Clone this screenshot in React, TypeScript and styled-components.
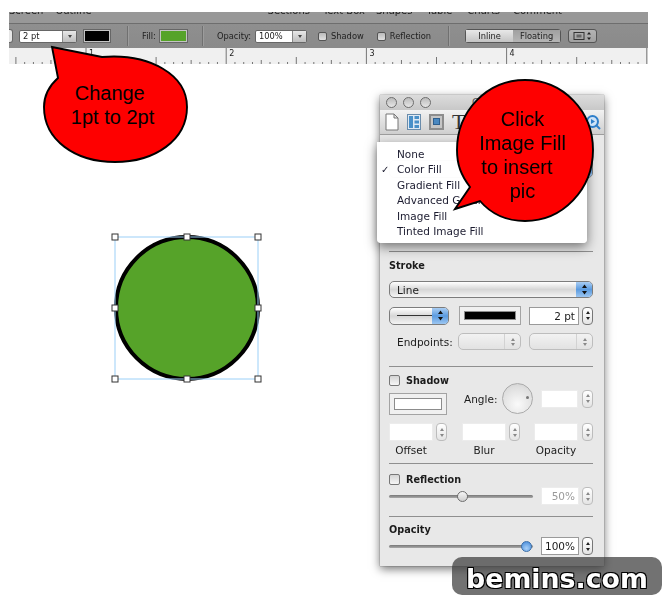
import { createGlobalStyle } from "styled-components";
import styled from "styled-components";
import type { ReactNode } from "react";

const GlobalStyle = createGlobalStyle`
  html, body { margin: 0; padding: 0; background: #fff; }
  body { font-family: "DejaVu Sans", sans-serif; }
`;

const Stage = styled.div`
  position: relative;
  width: 664px;
  height: 602px;
  overflow: hidden;
  background: #fff;
  padding: 12px 0 0 9px;
  box-sizing: border-box;
`;

/* ---- top toolbar ---- */
const Chrome = styled.div`
  width: 639px;
  filter: blur(0.35px);
`;

const MenuStrip = styled.div`
  height: 11px;
  overflow: hidden;
  background: #989898;
  border-bottom: 1px solid #6e6e6e;
  display: flex;
  color: #222;
  font-size: 10px;
  line-height: 10px;
`;

const MenuWord = styled.span<{ $left: number }>`
  margin-left: ${({ $left }) => $left}px;
  margin-top: -6px;
  white-space: nowrap;
`;

const ToolRow = styled.div`
  height: 24px;
  background: linear-gradient(#8f8f8f, #8a8a8a);
  display: flex;
  align-items: center;
  font-size: 8.3px;
  color: #222;
`;

const Spaced = styled.div<{ $left?: number }>`
  margin-left: ${({ $left }) => $left ?? 0}px;
  display: flex;
  align-items: center;
`;

const StubBox = styled(Spaced)`
  width: 3px;
  height: 12px;
  background: #e6e6e6;
  border: 1px solid #666;
  border-left: 0;
  border-radius: 0 3px 3px 0;
`;

const Combo = styled(Spaced)<{ $width: number }>`
  width: ${({ $width }) => $width}px;
  height: 13px;
  border: 1px solid #666;
  border-radius: 2px;
  background: #fff;
  box-sizing: border-box;
  padding-left: 3px;
  color: #222;
  position: relative;
  justify-content: flex-start;
  white-space: nowrap;
`;

const ComboArrow = styled.span`
  position: absolute;
  right: 0;
  top: 0;
  bottom: 0;
  width: 13px;
  background: linear-gradient(#e8e8e8, #bdbdbd);
  border-left: 1px solid #888;
  display: flex;
  align-items: center;
  justify-content: center;
  &::after {
    content: "";
    border-left: 2px solid transparent;
    border-right: 2px solid transparent;
    border-top: 3px solid #444;
  }
`;

const Swatch = styled(Spaced)<{ $color: string; $width: number }>`
  width: ${({ $width }) => $width}px;
  height: 14px;
  box-sizing: border-box;
  background: ${({ $color }) => $color};
  border: 2px solid #c4c4c4;
  outline: 1px solid #666;
  outline-offset: -1px;
`;

const ToolSep = styled(Spaced)`
  width: 1px;
  height: 20px;
  background: #707070;
  border-right: 1px solid #9c9c9c;
`;

const ToolLabel = styled(Spaced)`
  white-space: nowrap;
  color: #1f1f1f;
`;

const ToolCheck = styled(Spaced)`
  width: 9px;
  height: 9px;
  box-sizing: border-box;
  background: linear-gradient(#bbb, #e0e0e0);
  border: 1px solid #555;
  border-radius: 2px;
`;

const Segments = styled(Spaced)`
  border: 1px solid #555;
  border-radius: 3px;
  height: 14px;
  box-sizing: border-box;
`;

const Segment = styled.span<{ $active?: boolean }>`
  width: 47px;
  height: 100%;
  display: flex;
  align-items: center;
  justify-content: center;
  background: ${({ $active }) =>
    $active ? "linear-gradient(#a0a0a0, #b5b5b5)" : "linear-gradient(#e8e8e8, #c4c4c4)"};
`;

const WrapControl = styled(Spaced)`
  width: 29px;
  height: 14px;
  box-sizing: border-box;
  border: 1px solid #555;
  border-radius: 3px;
  background: linear-gradient(#b4b4b4, #a0a0a0);
  justify-content: center;
`;

const Ruler = styled.svg`
  display: block;
  background: #f0f0f0;
`;

const RULER_WIDTH = 639;
const INCH = 140.2;
const ORIGIN = 77 - INCH;

function RulerMarks() {
  const ticks = [];
  for (let i = 0; i * (INCH / 16) + ORIGIN < RULER_WIDTH; i++) {
    const x = i * (INCH / 16) + ORIGIN;
    if (x < 0) continue;
    const h = i % 16 === 0 ? 16 : i % 8 === 0 ? 7 : i % 4 === 0 ? 4 : 2;
    ticks.push(<line key={i} x1={x} x2={x} y1={16} y2={16 - h} stroke="#555" strokeWidth={0.8} />);
  }
  return (
    <Ruler width={RULER_WIDTH} height={16} viewBox="0 0 639 16">
      {ticks}
      {[1, 2, 3, 4].map((n) => (
        <text key={n} x={ORIGIN + n * INCH + 3} y={8} fontSize={8} fill="#222" fontFamily="DejaVu Sans, sans-serif">
          {n}
        </text>
      ))}
    </Ruler>
  );
}

/* ---- shape on the canvas ---- */
const ShapeArt = styled.svg`
  position: absolute;
  left: 105px;
  top: 227px;
`;

function SelectedCircle() {
  const pts = [
    [10, 10], [82, 10], [153, 10],
    [10, 81], [153, 81],
    [10, 152], [82, 152], [153, 152],
  ];
  return (
    <ShapeArt width={164} height={164} viewBox="0 0 164 164">
      <circle cx={82} cy={81} r={71} fill="#56a329" stroke="#000" strokeWidth={4} />
      <rect x={10} y={10} width={143} height={142} fill="none" stroke="#9bd0f8" strokeWidth={1} />
      {pts.map(([x, y]) => (
        <rect key={`${x}-${y}`} x={x - 3} y={y - 3} width={6} height={6} fill="#fff" stroke="#333" strokeWidth={1} />
      ))}
    </ShapeArt>
  );
}

/* ---- inspector window ---- */
const Inspector = styled.div`
  position: absolute;
  left: 380px;
  top: 95px;
  width: 224px;
  height: 471px;
  box-sizing: border-box;
  background: #e8e8e8;
  box-shadow: 0 3px 9px rgba(0, 0, 0, 0.55), 0 0 1px rgba(0, 0, 0, 0.6);
  color: #1b1b1b;
  font-size: 10.5px;
  filter: blur(0.3px);
  display: flex;
  flex-direction: column;
`;

const TitleBar = styled.div`
  height: 15px;
  flex: none;
  background: linear-gradient(#dcdcdc, #c8c8c8);
  display: flex;
  align-items: center;
  padding-left: 6px;
  gap: 6px;
  color: #555;
`;

const Light = styled.span`
  width: 11px;
  height: 11px;
  box-sizing: border-box;
  border-radius: 50%;
  border: 1.5px solid #6d6d6d;
  background: linear-gradient(#bbb, #e6e6e6);
`;

const WindowName = styled.span`
  margin-left: 35px;
  font-size: 10px;
`;

const ToolTabs = styled.div`
  height: 25px;
  flex: none;
  box-sizing: border-box;
  background: linear-gradient(#f2f2f2, #cfcfcf);
  border-bottom: 1px solid #9d9d9d;
  display: flex;
  align-items: center;
  padding: 0 3px 0 5px;
  gap: 8px;
`;

const SerifT = styled.span`
  font-family: "Liberation Serif", serif;
  font-size: 22px;
  line-height: 22px;
  color: #333;
`;

const QuickTime = styled.svg`
  margin-left: auto;
`;

const Body = styled.div`
  flex: 1;
  padding: 0 11px 0 9px;
  display: flex;
  flex-direction: column;
`;

const FillBlock = styled.div`
  height: 116px;
  flex: none;
  padding-top: 25px;
  box-sizing: border-box;
`;

const Rule = styled.div`
  height: 1px;
  flex: none;
  background: #8f8f8f;
`;

const Section = styled.div<{ $height: number }>`
  height: ${({ $height }) => $height}px;
  flex: none;
  display: flex;
  flex-direction: column;
`;

const Heading = styled.div<{ $top: number }>`
  margin-top: ${({ $top }) => $top}px;
  font-weight: 700;
  line-height: 14px;
  font-size: 9.7px;
`;

const Popup = styled.div<{ $width: number; $height?: number }>`
  width: ${({ $width }) => $width}px;
  height: ${({ $height }) => $height ?? 17}px;
  box-sizing: border-box;
  border: 1px solid #7c7c7c;
  border-radius: 5px;
  background: linear-gradient(#fff, #d6d6d6 50%, #f4f4f4);
  display: flex;
  align-items: center;
  padding-left: 7px;
  position: relative;
  overflow: hidden;
  flex: none;
`;

const PopupButton = styled.span`
  position: absolute;
  right: 0;
  top: 0;
  bottom: 0;
  width: 16px;
  background: linear-gradient(#a9cdf3, #5b9be0 50%, #9cc6f1);
  display: flex;
  align-items: center;
  justify-content: center;
`;

const LineSample = styled.span`
  width: 36px;
  height: 1px;
  background: #333;
`;

const Row = styled.div<{ $top: number }>`
  display: flex;
  align-items: center;
  margin-top: ${({ $top }) => $top}px;
`;

const ColorWell = styled.div<{ $width: number; $height: number; $left?: number }>`
  width: ${({ $width }) => $width}px;
  height: ${({ $height }) => $height}px;
  margin-left: ${({ $left }) => $left ?? 0}px;
  box-sizing: border-box;
  flex: none;
  border: 1px solid #a3a3a3;
  padding: 4px;
  background: #f0f0f0;
  display: flex;
`;

const WellFill = styled.span<{ $color: string }>`
  flex: 1;
  background: ${({ $color }) => $color};
  border: 1px solid #8c8c8c;
`;

const Field = styled.div<{ $width: number; $left?: number; $strong?: boolean; $dim?: boolean }>`
  width: ${({ $width }) => $width}px;
  height: 18px;
  margin-left: ${({ $left }) => $left ?? 0}px;
  box-sizing: border-box;
  flex: none;
  background: #fff;
  border: 1px solid ${({ $strong }) => ($strong ? "#9a9a9a" : "#ececec")};
  color: ${({ $dim }) => ($dim ? "#9a9a9a" : "#1b1b1b")};
  display: flex;
  align-items: center;
  justify-content: flex-end;
  padding-right: 3px;
`;

const StepBox = styled.div<{ $left: number; $dim?: boolean }>`
  width: 11px;
  height: 18px;
  margin-left: ${({ $left }) => $left}px;
  box-sizing: border-box;
  flex: none;
  border: 1px solid ${({ $dim }) => ($dim ? "#bcbcbc" : "#777")};
  border-radius: 4px;
  background: linear-gradient(#fff, #e4e4e4);
  display: flex;
  flex-direction: column;
  align-items: center;
  justify-content: center;
  gap: 3px;
`;

const StepUp = styled.span<{ $dim?: boolean }>`
  border-left: 2px solid transparent;
  border-right: 2px solid transparent;
  border-bottom: 3px solid ${({ $dim }) => ($dim ? "#888" : "#222")};
`;

const StepDown = styled.span<{ $dim?: boolean }>`
  border-left: 2px solid transparent;
  border-right: 2px solid transparent;
  border-top: 3px solid ${({ $dim }) => ($dim ? "#888" : "#222")};
`;

function Stepper({ left, dim }: { left: number; dim?: boolean }) {
  return (
    <StepBox $left={left} $dim={dim}>
      <StepUp $dim={dim} />
      <StepDown $dim={dim} />
    </StepBox>
  );
}

const EndLabel = styled.span`
  margin-left: 8px;
  width: 61px;
  flex: none;
`;

const EndPopup = styled(Popup)<{ $left: number }>`
  margin-left: ${({ $left }) => $left}px;
  border-color: #bdbdbd;
  background: linear-gradient(#f2f2f2, #e2e2e2);
`;

const EndArrows = styled.span`
  position: absolute;
  right: 0;
  top: 0;
  bottom: 0;
  width: 15px;
  border-left: 1px solid #d2d2d2;
  display: flex;
  flex-direction: column;
  align-items: center;
  justify-content: center;
  gap: 2px;
`;

const CheckRow = styled.label<{ $top: number }>`
  display: flex;
  align-items: center;
  gap: 6px;
  height: 12px;
  margin-top: ${({ $top }) => $top}px;
  font-weight: 700;
  font-size: 9.7px;
`;

const CheckBox = styled.span`
  width: 11px;
  height: 11px;
  box-sizing: border-box;
  border: 1px solid #777;
  border-radius: 2px;
  background: linear-gradient(#d4d4d4, #f6f6f6);
`;

const ShadowTop = styled.div`
  display: flex;
  margin-top: 7px;
`;

const ShadowLeft = styled.div`
  width: 75px;
  flex: none;
  display: flex;
  flex-direction: column;
  gap: 7px;
`;

const ShadowRight = styled.div`
  display: flex;
  align-items: center;
  margin-top: 9px;
  height: 31px;
`;

const AngleLabel = styled.span`
  width: 38px;
  flex: none;
  font-weight: 500;
`;

const Knob = styled.div`
  width: 31px;
  height: 31px;
  flex: none;
  box-sizing: border-box;
  border-radius: 50%;
  border: 1px solid #aaa;
  background: radial-gradient(circle at 50% 70%, #fafafa, #dedede 70%, #c8c8c8);
  position: relative;
  &::after {
    content: "";
    position: absolute;
    right: 3px;
    top: 12px;
    width: 3px;
    height: 3px;
    border-radius: 50%;
    background: #777;
  }
`;

const FieldRow = styled(Row)``;

const FieldCaptions = styled.div`
  display: grid;
  grid-template-columns: 44px 29px 44px 28px 44px;
  line-height: 14px;
  margin-top: 2px;
`;

const Caption = styled.span<{ $col: number }>`
  grid-column: ${({ $col }) => $col};
  text-align: center;
  white-space: nowrap;
  justify-self: center;
`;

const Track = styled.div`
  width: 144px;
  height: 3px;
  flex: none;
  border-radius: 2px;
  background: linear-gradient(#777, #aaa);
  position: relative;
`;

const Thumb = styled.span<{ $at: number; $on?: boolean }>`
  position: absolute;
  left: ${({ $at }) => $at}px;
  top: -4px;
  width: 11px;
  height: 11px;
  margin-left: -5px;
  box-sizing: border-box;
  border-radius: 50%;
  border: 1px solid ${({ $on }) => ($on ? "#3a6ea8" : "#6d6d6d")};
  background: ${({ $on }) =>
    $on ? "radial-gradient(circle at 50% 70%, #a8d0f8, #3f86d8)" : "linear-gradient(#f6f6f6, #cfcfcf)"};
`;

/* ---- fill popup menu ---- */
const FillMenu = styled.ul`
  position: absolute;
  left: 377px;
  top: 142px;
  width: 210px;
  height: 101px;
  box-sizing: border-box;
  margin: 0;
  padding: 5px 0 0 20px;
  list-style: none;
  background: rgba(255, 255, 255, 0.98);
  border-radius: 0 0 4px 4px;
  box-shadow: 0 4px 12px rgba(0, 0, 0, 0.5);
  font-size: 10.5px;
  color: #1c1c30;
  filter: blur(0.25px);
`;

const FillItem = styled.li`
  height: 15.4px;
  line-height: 15.4px;
  position: relative;
  white-space: nowrap;
`;

const Tick = styled.span`
  position: absolute;
  left: -16px;
  font-size: 10px;
`;

/* ---- red speech bubbles ---- */
const Callout = styled.div<{ $left: number; $top: number; $width: number; $height: number; $padTop: number; $padRight: number }>`
  position: absolute;
  left: ${({ $left }) => $left}px;
  top: ${({ $top }) => $top}px;
  width: ${({ $width }) => $width}px;
  height: ${({ $height }) => $height}px;
  box-sizing: border-box;
  padding: ${({ $padTop }) => $padTop}px ${({ $padRight }) => $padRight}px 0 0;
  display: flex;
  flex-direction: column;
  align-items: center;
  font-family: "Liberation Sans", Arial, sans-serif;
  font-size: 20px;
  line-height: 24px;
  color: #000;
  white-space: pre;
`;

const CalloutArt = styled.svg`
  position: absolute;
  left: 0;
  top: 0;
`;

const CalloutLine = styled.span`
  position: relative;
`;

function Bubble(props: {
  left: number;
  top: number;
  width: number;
  height: number;
  padTop: number;
  padRight: number;
  path: string;
  children: ReactNode;
}) {
  const { left, top, width, height, padTop, padRight, path, children } = props;
  return (
    <Callout $left={left} $top={top} $width={width} $height={height} $padTop={padTop} $padRight={padRight}>
      <CalloutArt width={width} height={height} viewBox={`${left} ${top} ${width} ${height}`}>
        <path d={path} fill="#fe0000" stroke="#000" strokeWidth={1.9} strokeLinejoin="miter" />
      </CalloutArt>
      {children}
    </Callout>
  );
}

/* ---- watermark ---- */
const Watermark = styled.div`
  position: absolute;
  left: 452px;
  top: 557px;
  width: 210px;
  height: 38px;
  box-sizing: border-box;
  border-radius: 10px;
  background: rgba(60, 60, 60, 0.72);
  display: flex;
  align-items: flex-end;
  justify-content: center;
  color: #fff;
  font-family: "DejaVu Sans", sans-serif;
  font-weight: 700;
  font-size: 26.8px;
  line-height: 32px;
  text-shadow: 1px 1px 0 #000, -1px 1px 0 #000, 1px -1px 0 #000, -1px -1px 0 #000;
`;

const Arrows = () => (
  <svg width="7" height="11" viewBox="0 0 7 11">
    <path d="M3.5 0.5 L6 4 H1 Z M3.5 10.5 L6 7 H1 Z" fill="#111" />
  </svg>
);

const DimArrows = () => (
  <>
    <StepUp $dim />
    <StepDown $dim />
  </>
);

export default function App() {
  return (
    <Stage>
      <GlobalStyle />
      <Chrome>
        <MenuStrip>
          <MenuWord $left={0}>Screen</MenuWord>
          <MenuWord $left={12}>Outline</MenuWord>
          <MenuWord $left={176}>Sections</MenuWord>
          <MenuWord $left={13}>Text Box</MenuWord>
          <MenuWord $left={11}>Shapes</MenuWord>
          <MenuWord $left={14}>Table</MenuWord>
          <MenuWord $left={15}>Charts</MenuWord>
          <MenuWord $left={13}>Comment</MenuWord>
        </MenuStrip>
        <ToolRow>
          <StubBox />
          <Combo $left={6} $width={58}>
            2 pt
            <ComboArrow />
          </Combo>
          <Swatch $left={6} $color="#000" $width={28} />
          <ToolSep $left={16} />
          <ToolLabel $left={13}>Fill:</ToolLabel>
          <Swatch $left={3} $color="#56a329" $width={29} />
          <ToolSep $left={14} />
          <ToolLabel $left={13}>Opacity:</ToolLabel>
          <Combo $left={4} $width={52}>
            100%
            <ComboArrow />
          </Combo>
          <ToolCheck $left={11} />
          <ToolLabel $left={4}>Shadow</ToolLabel>
          <ToolCheck $left={13} />
          <ToolLabel $left={4}>Reflection</ToolLabel>
          <ToolSep $left={17} />
          <Segments $left={15}>
            <Segment>Inline</Segment>
            <Segment $active>Floating</Segment>
          </Segments>
          <WrapControl $left={7}>
            <svg width="20" height="10" viewBox="0 0 20 10">
              <rect x="1" y="1.5" width="10" height="7" fill="none" stroke="#333" />
              <rect x="3.5" y="3.5" width="5" height="3" fill="#666" />
              <path d="M16 1 L18 3.5 H14 Z M16 9 L18 6.5 H14 Z" fill="#222" />
            </svg>
          </WrapControl>
        </ToolRow>
        <RulerMarks />
      </Chrome>

      <SelectedCircle />

      <Inspector>
        <TitleBar>
          <Light />
          <Light />
          <Light />
          <WindowName>Graphic</WindowName>
        </TitleBar>
        <ToolTabs>
          <svg width="14" height="18" viewBox="0 0 14 18">
            <path d="M1 1 H9 L13 5 V17 H1 Z M9 1 V5 H13" fill="#fff" stroke="#777" />
          </svg>
          <svg width="14" height="16" viewBox="0 0 14 16">
            <rect x="0.5" y="0.5" width="13" height="15" fill="#dfe9f3" stroke="#6a8cab" />
            <rect x="2" y="2" width="4" height="12" fill="#4a90c8" />
            <rect x="7.5" y="2" width="4.5" height="3" fill="#4a90c8" />
            <rect x="7.5" y="6.5" width="4.5" height="3" fill="#4a90c8" />
            <rect x="7.5" y="11" width="4.5" height="3" fill="#4a90c8" />
          </svg>
          <svg width="15" height="16" viewBox="0 0 15 16">
            <rect x="0" y="0" width="15" height="16" fill="#8d8d8d" />
            <rect x="2" y="2" width="11" height="12" fill="#c5c5c5" />
            <rect x="4.5" y="4.5" width="6" height="6" fill="#4a88c0" stroke="#2f5f8e" />
          </svg>
          <SerifT>T</SerifT>
          <QuickTime width="16" height="16" viewBox="0 0 16 16">
            <circle cx="7.5" cy="7.5" r="5.5" fill="#cfe3f7" stroke="#2f7fca" strokeWidth="2" />
            <path d="M11 11 L15 15" stroke="#2f7fca" strokeWidth="2" />
            <path d="M6 5 L10 7.5 L6 10 Z" fill="#2f7fca" />
          </QuickTime>
        </ToolTabs>
        <Body>
          <FillBlock>
            <Popup $width={204} $height={18}>
              Color Fill
              <PopupButton>
                <Arrows />
              </PopupButton>
            </Popup>
          </FillBlock>
          <Rule />
          <Section $height={114}>
            <Heading $top={7}>Stroke</Heading>
            <Row $top={8}>
              <Popup $width={204}>
                Line
                <PopupButton>
                  <Arrows />
                </PopupButton>
              </Popup>
            </Row>
            <Row $top={8}>
              <Popup $width={60} $height={18}>
                <LineSample />
                <PopupButton>
                  <Arrows />
                </PopupButton>
              </Popup>
              <ColorWell $width={62} $height={19} $left={10}>
                <WellFill $color="#000" />
              </ColorWell>
              <Field $width={50} $left={8} $strong>
                2 pt
              </Field>
              <Stepper left={3} />
            </Row>
            <Row $top={8}>
              <EndLabel>Endpoints:</EndLabel>
              <EndPopup $width={63} $left={0}>
                <EndArrows>
                  <DimArrows />
                </EndArrows>
              </EndPopup>
              <EndPopup $width={64} $left={8}>
                <EndArrows>
                  <DimArrows />
                </EndArrows>
              </EndPopup>
            </Row>
          </Section>
          <Rule />
          <Section $height={96}>
            <ShadowTop>
              <ShadowLeft>
                <CheckRow $top={0}>
                  <CheckBox />
                  Shadow
                </CheckRow>
                <ColorWell $width={58} $height={22}>
                  <WellFill $color="#fff" />
                </ColorWell>
              </ShadowLeft>
              <ShadowRight>
                <AngleLabel>Angle:</AngleLabel>
                <Knob />
                <Field $width={37} $left={8} />
                <Stepper left={4} dim />
              </ShadowRight>
            </ShadowTop>
            <FieldRow $top={8}>
              <Field $width={44} />
              <Stepper left={3} dim />
              <Field $width={44} $left={15} />
              <Stepper left={3} dim />
              <Field $width={44} $left={14} />
              <Stepper left={4} dim />
            </FieldRow>
            <FieldCaptions>
              <Caption $col={1}>Offset</Caption>
              <Caption $col={3}>Blur</Caption>
              <Caption $col={5}>Opacity</Caption>
            </FieldCaptions>
          </Section>
          <Rule />
          <Section $height={52}>
            <CheckRow $top={9}>
              <CheckBox />
              Reflection
            </CheckRow>
            <Row $top={2}>
              <Track>
                <Thumb $at={73} />
              </Track>
              <Field $width={38} $left={8} $dim>
                50%
              </Field>
              <Stepper left={3} dim />
            </Row>
          </Section>
          <Rule />
          <Section $height={49}>
            <Heading $top={6}>Opacity</Heading>
            <Row $top={0}>
              <Track>
                <Thumb $at={137} $on />
              </Track>
              <Field $width={38} $left={8} $strong>
                100%
              </Field>
              <Stepper left={3} />
            </Row>
          </Section>
        </Body>
      </Inspector>

      <FillMenu>
        <FillItem>None</FillItem>
        <FillItem>
          <Tick>✓</Tick>
          Color Fill
        </FillItem>
        <FillItem>Gradient Fill</FillItem>
        <FillItem>Advanced Gradient Fill</FillItem>
        <FillItem>Image Fill</FillItem>
        <FillItem>Tinted Image Fill</FillItem>
      </FillMenu>

      <Bubble
        left={40}
        top={44}
        width={152}
        height={122}
        padTop={37}
        padRight={7}
        path="M52 47 L102 57 C150 53 187 75 187 107 C187 140 155 162 115 162 C75 162 44 140 44 107 C44 96 49 86 58 78 Z"
      >
        <CalloutLine>{"Change\u00a0"}</CalloutLine>
        <CalloutLine>1pt to 2pt</CalloutLine>
      </Bubble>

      <Bubble
        left={450}
        top={76}
        width={148}
        height={150}
        padTop={31}
        padRight={3}
        path="M455 209 L480 201 C492 215 508 221 525 221 C563 221 593 189 593 150 C593 111 563 80 525 80 C487 80 457 111 457 150 C457 165 461 175 470 187 Z"
      >
        <CalloutLine>Click</CalloutLine>
        <CalloutLine>Image Fill</CalloutLine>
        <CalloutLine>{"to insert\u00a0\u00a0"}</CalloutLine>
        <CalloutLine>pic</CalloutLine>
      </Bubble>

      <Watermark>bemins.com</Watermark>
    </Stage>
  );
}
